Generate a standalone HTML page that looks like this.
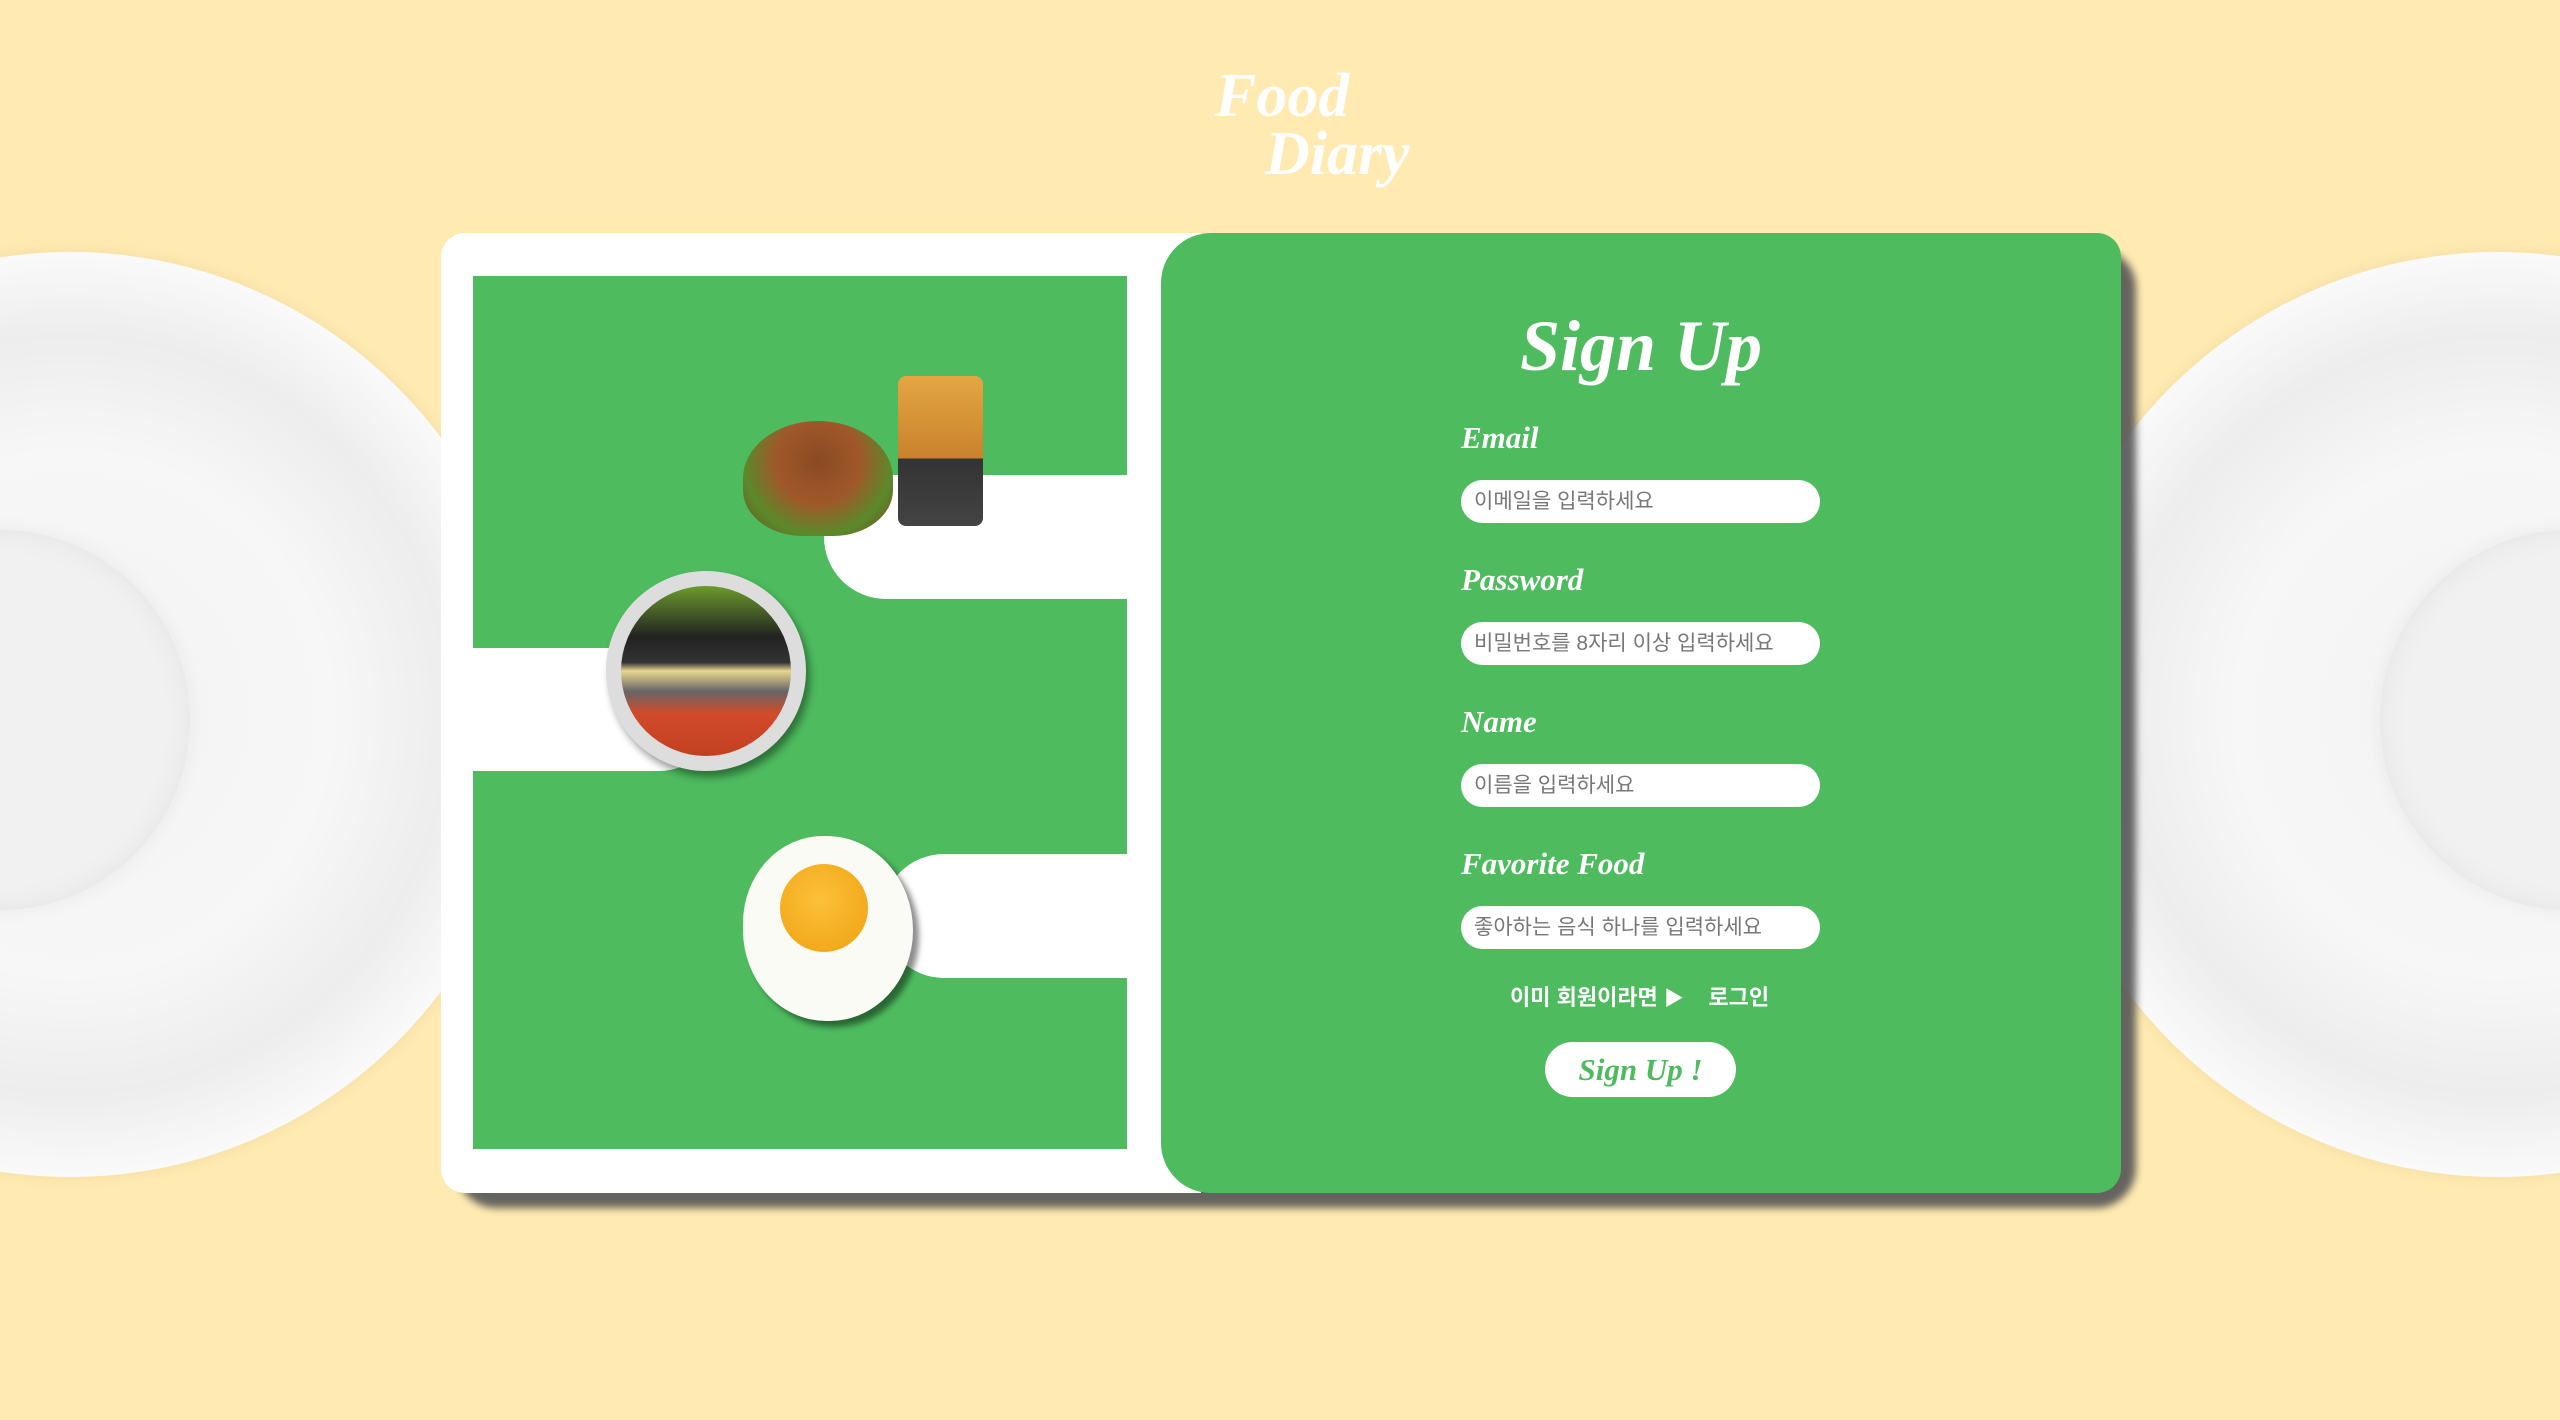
<!DOCTYPE html>
<html><head><meta charset="utf-8"><style>
*{margin:0;padding:0;box-sizing:border-box}
body{width:2560px;height:1420px;background:#FFEAB1;position:relative;overflow:hidden;font-family:"Liberation Sans","Noto Sans CJK KR",sans-serif}
.abs{position:absolute}
.plate{border-radius:50%;background:radial-gradient(circle at 50% 50%,#f2f2f2 0,#f7f7f7 40%,#ededed 58%,#fbfbfb 72%,#f6f6f6 90%,#e4e4e4 100%);box-shadow:0 0 16px rgba(0,0,0,.06)}
.inner{border-radius:50%;background:#f1f1f1;box-shadow:inset 0 0 30px rgba(0,0,0,.06),0 0 20px rgba(0,0,0,.05)}
.script{font-family:"Liberation Serif",serif;font-style:italic;font-weight:bold;color:#fff}
.inp{position:absolute;left:1461px;width:359px;height:43px;background:#fff;border-radius:22px;color:#777;font-size:21px;line-height:43px;padding-left:13px}
.lbl{position:absolute;left:1461px;font-size:31px}
</style></head><body>
<div class="abs plate" style="left:-392px;top:252px;width:925px;height:925px"></div>
<div class="abs inner" style="left:-190px;top:530px;width:380px;height:380px"></div>
<div class="abs plate" style="left:2035px;top:252px;width:925px;height:925px"></div>
<div class="abs inner" style="left:2380px;top:530px;width:380px;height:380px"></div>

<div class="abs script" style="left:1215px;top:66px;font-size:62px;line-height:60px">Food</div>
<div class="abs script" style="left:1265px;top:124px;font-size:62px;line-height:60px">Diary</div>

<div class="abs" style="left:456px;top:248px;width:1680px;height:960px;background:#555;border-radius:40px;filter:blur(4px);opacity:.9"></div>
<div class="abs" style="left:441px;top:233px;width:760px;height:960px;background:#fff;border-radius:24px 0 0 24px"></div>
<div class="abs" style="left:1161px;top:233px;width:960px;height:960px;background:#4DBB5E;border-radius:50px 24px 24px 50px"></div>

<div class="abs" style="left:473px;top:276px;width:654px;height:873px;background:#4DBB5E;overflow:hidden">
 <div class="abs" style="left:351px;top:199px;width:400px;height:124px;background:#fff;border-radius:62px"></div>
 <div class="abs" style="left:-100px;top:372px;width:347px;height:123px;background:#fff;border-radius:62px"></div>
 <div class="abs" style="left:409px;top:578px;width:400px;height:124px;background:#fff;border-radius:62px"></div>
 <div class="abs" style="left:425px;top:100px;width:85px;height:150px;background:linear-gradient(#e4a642,#c9822c 55%,#333 55%,#444);border-radius:8px"></div>
 <div class="abs" style="left:270px;top:145px;width:150px;height:115px;background:radial-gradient(ellipse at 50% 35%,#8a4a22 0,#a0582a 40%,#5a8a2a 70%,#7a4020 100%);border-radius:50% 50% 40% 40%"></div>
 <div class="abs" style="left:133px;top:295px;width:200px;height:200px;border-radius:50%;background:#ddd;box-shadow:4px 6px 8px rgba(0,0,0,.4)"></div>
 <div class="abs" style="left:148px;top:310px;width:170px;height:170px;border-radius:50%;background:linear-gradient(#6c9a2c 0,#222 30%,#333 45%,#e8d690 50%,#666 62%,#d24a2a 75%,#c24020 100%)"></div>
 <div class="abs" style="left:270px;top:560px;width:170px;height:185px;border-radius:48% 52% 50% 50%;background:#fbfbf6;box-shadow:6px 6px 6px rgba(0,0,0,.45)"></div>
 <div class="abs" style="left:307px;top:588px;width:88px;height:88px;border-radius:50%;background:radial-gradient(circle at 45% 40%,#fbc13a,#f0a010)"></div>
</div>

<div class="abs script" style="left:1441px;top:305px;width:400px;text-align:center;font-size:72px">Sign Up</div>
<div class="lbl script" style="top:420px">Email</div>
<div class="inp" style="top:480px">이메일을 입력하세요</div>
<div class="lbl script" style="top:562px">Password</div>
<div class="inp" style="top:622px">비밀번호를 8자리 이상 입력하세요</div>
<div class="lbl script" style="top:704px">Name</div>
<div class="inp" style="top:764px">이름을 입력하세요</div>
<div class="lbl script" style="top:846px">Favorite Food</div>
<div class="inp" style="top:906px">좋아하는 음식 하나를 입력하세요</div>
<div class="abs" style="left:1510px;top:980px;color:#fff;font-weight:bold;font-size:22px;white-space:nowrap">이미 회원이라면 <span style="font-size:20px">▶</span>&nbsp;&nbsp;&nbsp;&nbsp;로그인</div>
<div class="abs" style="left:1545px;top:1042px;width:191px;height:55px;background:#fff;border-radius:28px;text-align:center;line-height:55px;font-family:'Liberation Serif',serif;font-style:italic;font-weight:bold;font-size:31px;color:#4DBB5E">Sign Up !</div>
</body></html>
